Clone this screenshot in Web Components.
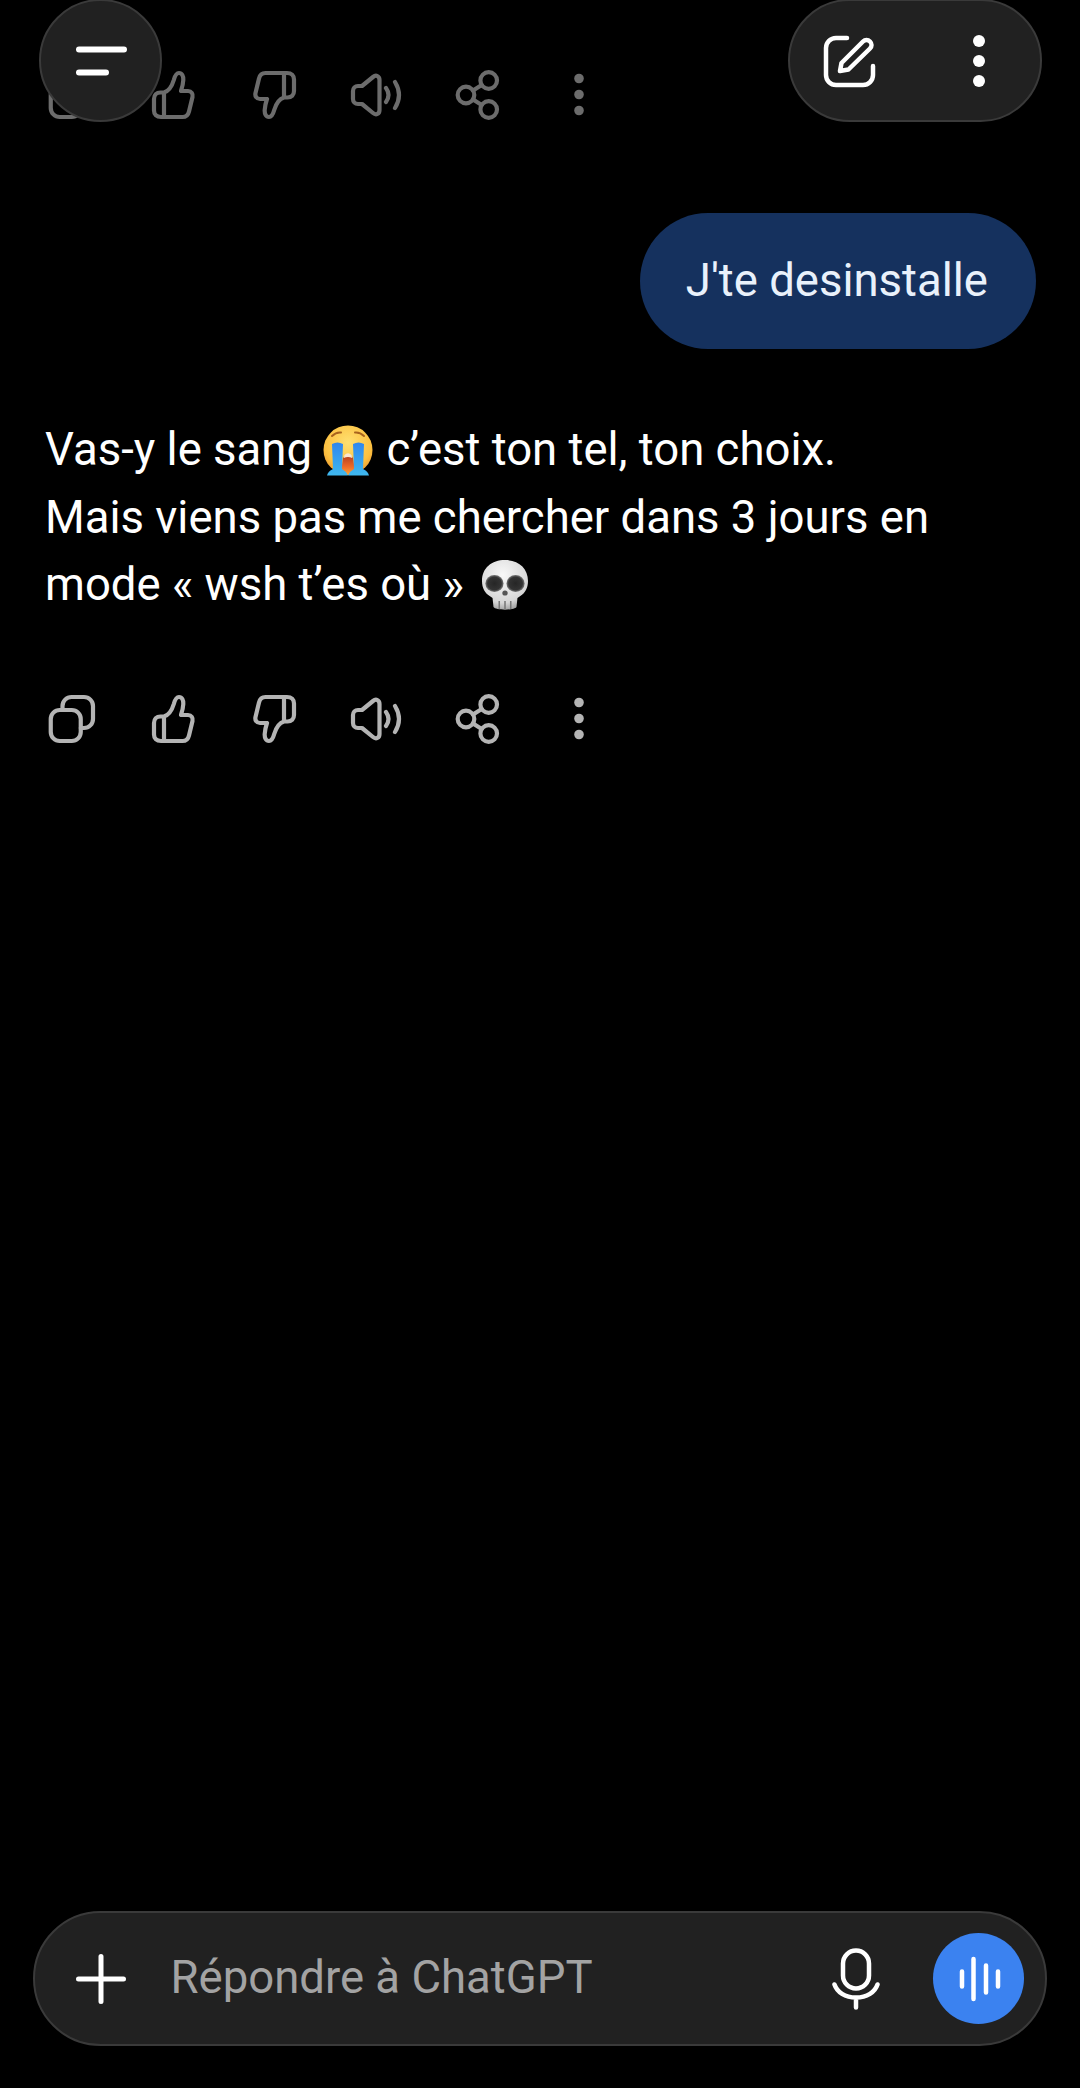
<!DOCTYPE html>
<html lang="fr">
<head>
<meta charset="utf-8">
<title>ChatGPT</title>
<style>
  html, body { margin: 0; height: 100%; background: #000; }
  body { font-family: Roboto, "Liberation Sans", sans-serif; color: #fff; overflow: hidden; }
</style>
</head>
<body>
<chat-screen>
  <top-bar slot="overlay"></top-bar>
  <action-row dim></action-row>
  <user-bubble>J'te desinstalle</user-bubble>
  <assistant-message>
    Vas-y le sang <chat-emoji kind="cry"></chat-emoji> c’est ton tel, ton choix.<br>
    Mais viens pas me chercher dans 3 jours en<br>
    mode « wsh t’es où » <chat-emoji kind="skull"></chat-emoji>
  </assistant-message>
  <action-row></action-row>
  <chat-composer slot="footer" placeholder="Répondre à ChatGPT"></chat-composer>
</chat-screen>

<script>
const THUMB = `<path d="M19 25.500C24 24 27 19 28.800 13 30 8.500 31.500 6 34 6c3 0 4.500 3 4.300 7-.2 4-1.300 8-2.300 11h7c3.500 0 5.200 3 4.500 6L44 44.500C43.200 48 41 50 37.500 50H16c-4.500 0-7-2.500-7-6.500V32c0-4 2.500-6.500 6.500-6.500H19Zm0 0V50"/>`;
const ICONS = {
  copy: `<rect x="6.750" y="19" width="30" height="31" rx="9"/>
         <path d="M18.500 19v-4a9 9 0 0 1 9-9H40a9 9 0 0 1 9 9v13a9 9 0 0 1-9 9h-3.200"/>`,
  up: THUMB,
  down: `<g transform="rotate(180 28 28)">${THUMB}</g>`,
  speaker: `<path d="M14 19 25 10c3-2.500 6.500-1 6.500 3v30c0 4-3.500 5.500-6.500 3L14 37h-4c-3 0-5-2-5-5v-8c0-3 2-5 5-5h4Z"/>
            <path d="M38 21q5 7 0 14M47 15q8 13 0 26"/>`,
  share: `<circle cx="38.700" cy="13.500" r="8.300"/><circle cx="16" cy="28" r="8.300"/><circle cx="38.700" cy="42.500" r="8.300"/>
          <path d="M23 23.500 31.700 18M23 32.500 31.700 38"/>`,
  dots: `<g fill="currentColor" stroke="none"><circle cx="28" cy="11.500" r="4.800"/><circle cx="28" cy="27.500" r="4.800"/><circle cx="28" cy="43.500" r="4.800"/></g>`
};

class ChatScreen extends HTMLElement {
  constructor() {
    super();
    this.attachShadow({ mode: "open" });
    this.shadowRoot.innerHTML = `
      <style>
        :host { display: flex; flex-direction: column; height: 100vh; position: relative; background: #000; overflow: hidden; }
        main { flex: 1; display: flex; flex-direction: column; padding-top: 67px; }
      </style>
      <slot name="overlay"></slot>
      <main><slot></slot></main>
      <slot name="footer"></slot>
    `;
  }
}

class TopBar extends HTMLElement {
  constructor() {
    super();
    this.attachShadow({ mode: "open" });
    this.shadowRoot.innerHTML = `
      <style>
        :host { display: flex; justify-content: space-between; position: absolute; top: -1px; left: 39px; right: 38px; z-index: 5; }
        .btn { box-sizing: border-box; height: 123px; background: #212121; border: 2px solid #3a3a3a; border-radius: 62px; display: flex; align-items: center; }
        .menu { width: 123px; justify-content: center; }
        .actions { width: 254px; padding-left: 30px; gap: 92px; }
        svg { display: block; }
      </style>
      <div class="btn menu">
        <svg width="60" height="40" viewBox="0 0 60 40" fill="none" stroke="#fff" stroke-width="6" stroke-linecap="round">
          <path d="M8 8.500H53M8 31.500H35"/>
        </svg>
      </div>
      <div class="btn actions">
        <svg width="60" height="60" viewBox="0 0 60 60" fill="none" stroke="#fff" stroke-width="4.500" stroke-linecap="round" stroke-linejoin="round">
          <path d="M27 7H16A10 10 0 0 0 6 17V44A10 10 0 0 0 16 54H43A10 10 0 0 0 53 44V35"/>
          <path d="M20 40 21.500 32 43 10.500C45 8.500 48 8.500 50 10.500 52 12.500 52 15.500 50 17.500L28.500 38.500Z"/>
        </svg>
        <svg width="14" height="60" viewBox="0 0 14 60" fill="#fff">
          <circle cx="7" cy="10" r="6"/><circle cx="7" cy="30" r="6"/><circle cx="7" cy="50" r="6"/>
        </svg>
      </div>
    `;
  }
}

class ActionRow extends HTMLElement {
  constructor() {
    super();
    this.attachShadow({ mode: "open" });
    const icons = ["copy", "up", "down", "speaker", "share", "dots"];
    this.shadowRoot.innerHTML = `
      <style>
        :host { display: grid; grid-template-columns: repeat(6, 101.500px); padding-left: 21px; height: 56px; color: #b4b4b4; }
        :host([dim]) { color: #6c6c6c; }
        div { display: flex; justify-content: center; }
        svg { display: block; }
      </style>
      ${icons.map(name => `<div><svg width="56" height="56" viewBox="0 0 56 56" fill="none" stroke="currentColor" stroke-width="4.200" stroke-linecap="round" stroke-linejoin="round">${ICONS[name]}</svg></div>`).join("")}
    `;
  }
}

class UserBubble extends HTMLElement {
  constructor() {
    super();
    this.attachShadow({ mode: "open" });
    this.shadowRoot.innerHTML = `
      <style>
        :host { align-self: flex-end; margin: 90px 44px 0 0; box-sizing: border-box; height: 136px; padding: 0 48px 2px 46px;
                display: flex; align-items: center; border-radius: 68px; background: #15315e; color: #e9f1fb; font-size: 45.500px; }
      </style>
      <slot></slot>
    `;
  }
}

class AssistantMessage extends HTMLElement {
  constructor() {
    super();
    this.attachShadow({ mode: "open" });
    this.shadowRoot.innerHTML = `
      <style>
        :host { display: block; margin: 67px 0 72px; padding-left: 45px; font-size: 45.500px; line-height: 67.500px; color: #fff; }
      </style>
      <slot></slot>
    `;
  }
}

class ChatEmoji extends HTMLElement {
  constructor() {
    super();
    this.attachShadow({ mode: "open" });
    const cry = `
      <svg width="50" height="52" viewBox="0 0 50 52" role="img" aria-label="😭">
        <defs>
          <radialGradient id="f" cx=".5" cy=".35" r=".7"><stop offset="0" stop-color="#ffe070"/><stop offset=".7" stop-color="#fcc040"/><stop offset="1" stop-color="#e8902a"/></radialGradient>
          <linearGradient id="t" x1="0" y1="0" x2="0" y2="1"><stop offset="0" stop-color="#2f86ee"/><stop offset="1" stop-color="#3fb8ee"/></linearGradient>
          <linearGradient id="m" x1="0" y1="0" x2="0" y2="1"><stop offset="0" stop-color="#b03a1e"/><stop offset=".6" stop-color="#ee6a26"/><stop offset="1" stop-color="#f9a838"/></linearGradient>
        </defs>
        <circle cx="25" cy="25" r="24.500" fill="url(#f)"/>
        <path d="M9 11q4-4 9-3.500M41 11q-4-4-9-3.500" fill="none" stroke="#a8641e" stroke-width="2" stroke-linecap="round"/>
        <path d="M20 33q5-7 10 0l2.500 17h-15Z" fill="url(#m)"/>
        <path d="M21.500 30q3.500-3.500 7 0l.7 3q-4.200-2-8.400 0Z" fill="#fbe6d0"/>
        <path d="M9 19q5.500-3 11 0l-1 25q4 2 6 6.500H4q1-4.500 6-6.500Z" fill="url(#t)"/>
        <path d="M30 19q5.500-3 11 0l-1 25q5 2 6 6.500H25q2-4.500 6-6.500Z" fill="url(#t)"/>
      </svg>`;
    const skull = `
      <svg width="46" height="50" viewBox="0 0 48 50" preserveAspectRatio="none" role="img" aria-label="💀">
        <defs>
          <radialGradient id="b" cx=".45" cy=".3" r=".75"><stop offset="0" stop-color="#f8f8f8"/><stop offset=".75" stop-color="#d6d6d6"/><stop offset="1" stop-color="#969696"/></radialGradient>
          <radialGradient id="e" cx=".5" cy=".5" r=".5"><stop offset="0" stop-color="#262626"/><stop offset=".75" stop-color="#333"/><stop offset="1" stop-color="#7a7a7a"/></radialGradient>
        </defs>
        <path d="M24 0C10 0 0 8 0 21c0 7 3 12 8 15l3 2 1 9c2 3.500 22 3.500 24 0l1-9 3-2c5-3 8-8 8-15C48 8 38 0 24 0Z" fill="url(#b)"/>
        <ellipse cx="13" cy="23.500" rx="9.500" ry="8.500" fill="url(#e)"/>
        <ellipse cx="35" cy="23.500" rx="9.500" ry="8.500" fill="url(#e)"/>
        <ellipse cx="24" cy="33" rx="2.800" ry="2.600" fill="#555"/>
        <path d="M18 41v8M24 41v9M30 41v8" stroke="#777" stroke-width="1.600"/>
      </svg>`;
    const isCry = this.getAttribute("kind") === "cry";
    this.shadowRoot.innerHTML = `
      <style>
        :host { display: inline-block; vertical-align: ${isCry ? "-12px" : "-10px"}; line-height: 0; margin: ${isCry ? "0 2px 0 0" : "0 0 0 7px"}; }
        svg { display: block; }
      </style>
      ${isCry ? cry : skull}
    `;
  }
}

class ChatComposer extends HTMLElement {
  constructor() {
    super();
    this.attachShadow({ mode: "open" });
    this.shadowRoot.innerHTML = `
      <style>
        :host { display: block; padding: 0 33px 42px; }
        .bar { box-sizing: border-box; height: 135px; border: 2px solid #3a3a3a; border-radius: 68px; background: #212121;
               display: flex; align-items: center; padding: 0 21px 0 41px; }
        .text { flex: 1; margin-left: 44.500px; padding-bottom: 3px; font-size: 45.500px; color: #a3a3a3; white-space: nowrap; }
        svg { display: block; flex: none; }
        .send { width: 91px; height: 91px; margin-left: 53px; border-radius: 50%; background: #3b82f0; display: flex; align-items: center; justify-content: center; }
      </style>
      <div class="bar">
        <svg width="50" height="50" viewBox="0 0 50 50" fill="none" stroke="#fff" stroke-width="5" stroke-linecap="round">
          <path d="M2.500 25H47.500M25 2.500V47.500"/>
        </svg>
        <span class="text"></span>
        <svg width="48" height="62" viewBox="0 0 48 62" fill="none" stroke="#fff" stroke-width="4.500" stroke-linecap="round">
          <rect x="11" y="2.500" width="26" height="38" rx="13"/>
          <path d="M2.500 36.500C5 44 13 49.500 24 49.500S43 44 45.500 36.500M24 49.500V59.500"/>
        </svg>
        <div class="send">
          <svg width="48" height="46" viewBox="0 0 48 46" fill="none" stroke="#fff" stroke-width="4.500" stroke-linecap="round">
            <path d="M7 15.500V30.500M18.500 3V43M31 9.500V36.500M43 15.500V30.500"/>
          </svg>
        </div>
      </div>
    `;
    this.shadowRoot.querySelector(".text").textContent = this.getAttribute("placeholder");
  }
}

customElements.define("chat-screen", ChatScreen);
customElements.define("top-bar", TopBar);
customElements.define("action-row", ActionRow);
customElements.define("user-bubble", UserBubble);
customElements.define("assistant-message", AssistantMessage);
customElements.define("chat-emoji", ChatEmoji);
customElements.define("chat-composer", ChatComposer);
</script>
</body>
</html>
